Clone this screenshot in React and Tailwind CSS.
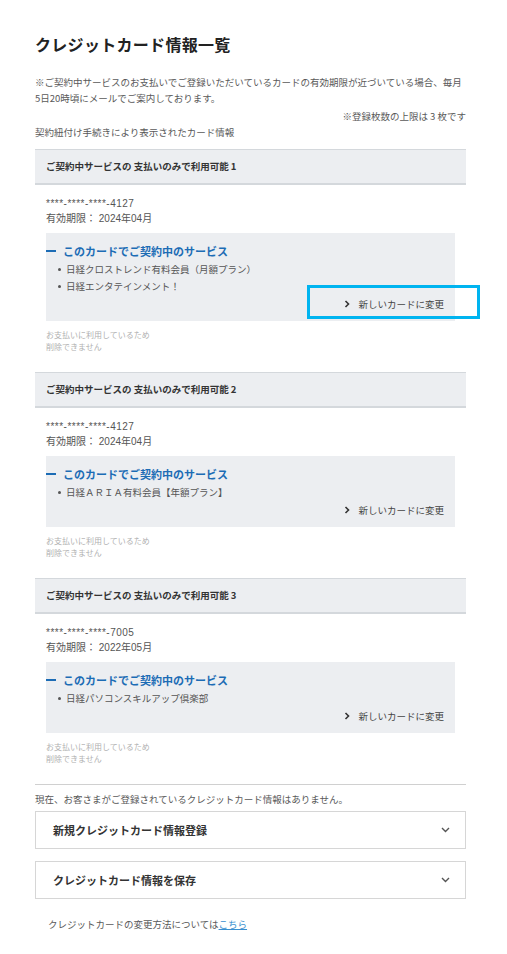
import React from "react";

const JP = { fontFamily: '"Noto Sans CJK JP", "Noto Sans", sans-serif' };

function Chevron() {
  return (
    <svg width="6" height="8" viewBox="0 0 6 8" className="mr-[8px]">
      <polyline points="1.5,1 4.5,4 1.5,7" fill="none" stroke="#333" strokeWidth="1.6" />
    </svg>
  );
}

function DownChevron() {
  return (
    <svg width="9" height="6" viewBox="0 0 9 6">
      <polyline points="1,1 4.5,4.5 8,1" fill="none" stroke="#555" strokeWidth="1.4" />
    </svg>
  );
}

function Card({ n, number, expiry, services, highlight }) {
  return (
    <div className="mb-[19px]">
      <div className="h-[36px] box-border border-t border-b-2 border-[#d4d8dc] bg-[#eceef1] flex items-center pl-[11px] text-[9.5px] font-bold text-[#333]">
        ご契約中サービスの 支払いのみで利用可能 {n}
      </div>
      <div className="px-[11px] pt-[11px]">
        <div className="text-[10px] leading-[15px] text-[#555] tracking-[0.5px]" style={{ fontFamily: '"Liberation Sans", "Noto Sans CJK JP", sans-serif' }}>
          {number}
        </div>
        <div className="text-[10px] leading-[15px] text-[#555]" style={{ fontFamily: '"Liberation Sans", "Noto Sans CJK JP", sans-serif' }}>
          有効期限： {expiry}
        </div>
        <div className="mt-[7px] bg-[#eceef1] pt-[10px] pb-[8px] pr-[11px]">
          <div className="flex items-center leading-[16px]">
            <span className="w-[10px] h-[2.5px] bg-[#1c6cb5] mr-[7px]" />
            <span className="text-[11px] font-bold text-[#1c6cb5]">このカードでご契約中のサービス</span>
          </div>
          <ul className="mt-[2px]">
            {services.map((s) => (
              <li key={s} className="flex items-center text-[9.5px] leading-[17px] text-[#555]">
                <span className="w-[3px] h-[3px] bg-[#555] ml-[12px] mr-[5px] rounded-full" />
                {s}
              </li>
            ))}
          </ul>
          <div className="relative flex items-center justify-end leading-[18px] text-[9.5px] text-[#444]">
            <Chevron />
            新しいカードに変更
            {highlight && (
              <div className="absolute -top-[10px] -right-[36px] w-[173px] h-[34px] border-[3px] border-[#00b4f0]" />
            )}
          </div>
        </div>
        <div className="mt-[8px] text-[8px] leading-[12px] text-[#b0b0b0]">
          <div>お支払いに利用しているため</div>
          <div>削除できません</div>
        </div>
      </div>
    </div>
  );
}

function Accordion({ label }) {
  return (
    <div className="h-[38px] box-border border border-[#d6d6d6] flex items-center justify-between pl-[17px] pr-[15px]">
      <span className="text-[11px] font-bold text-[#333]">{label}</span>
      <DownChevron />
    </div>
  );
}

export default function App() {
  return (
    <div className="bg-white min-h-[954px] w-[507px]" style={JP}>
      <div className="ml-[35px] w-[431px] pt-[32px] pb-[20px]">
        <h1 className="text-[16px] leading-[24px] font-bold text-[#222] tracking-[0.3px]">クレジットカード情報一覧</h1>
        <p className="mt-[18px] text-[9.5px] leading-[16px] text-[#595959]">
          ※ご契約中サービスのお支払いでご登録いただいているカードの有効期限が近づいている場合、毎月5日20時頃にメールでご案内しております。
        </p>
        <p className="mt-[2px] text-right text-[9.5px] leading-[16px] text-[#595959]">※登録枚数の上限は 3 枚です</p>
        <p className="text-[9.5px] leading-[16px] text-[#595959]">契約紐付け手続きにより表示されたカード情報</p>
        <div className="mt-[9px]">
          <Card
            n="1"
            number="****-****-****-4127"
            expiry="2024年04月"
            services={["日経クロストレンド有料会員（月額プラン）", "日経エンタテインメント！"]}
            highlight
          />
          <Card n="2" number="****-****-****-4127" expiry="2024年04月" services={["日経ＡＲＩＡ有料会員【年額プラン】"]} />
          <Card n="3" number="****-****-****-7005" expiry="2022年05月" services={["日経パソコンスキルアップ倶楽部"]} />
        </div>
        <div className="mt-[1px] border-t border-[#d0d0d0]" />
        <p className="mt-[6px] text-[9.5px] leading-[16px] text-[#595959]">
          現在、お客さまがご登録されているクレジットカード情報はありません。
        </p>
        <div className="mt-[4px] flex flex-col gap-[12px]">
          <Accordion label="新規クレジットカード情報登録" />
          <Accordion label="クレジットカード情報を保存" />
        </div>
        <p className="mt-[17px] pl-[13px] text-[9.5px] leading-[16px] text-[#595959]">
          クレジットカードの変更方法については
          <a href="#" className="text-[#3a8fd0] underline">こちら</a>
        </p>
      </div>
    </div>
  );
}
